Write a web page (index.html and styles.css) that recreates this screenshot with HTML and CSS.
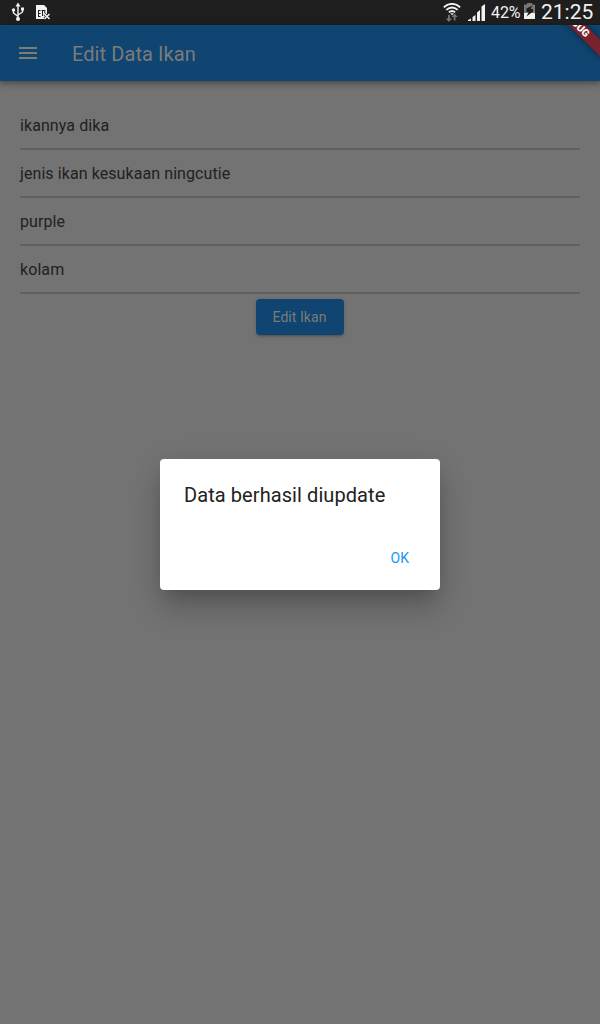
FILE: index.html
```html
<!DOCTYPE html>
<html lang="id">
<head>
<meta charset="utf-8">
<title>Edit Data Ikan</title>
<link rel="stylesheet" href="styles.css">
</head>
<body>
<div class="screen">
  <header class="status">
    <svg class="usb" width="14" height="20" viewBox="0 0 14 20" fill="none" stroke="#f2f2f2" stroke-width="1.4">
      <path d="M7 3v14M2.500 8.500v2.500L7 14.500M11.500 7.500v2.500L7 13"/>
      <path d="M7 .5 9.500 4.500h-5z" fill="#f2f2f2" stroke="none"/>
      <circle cx="7" cy="17" r="2" fill="#f2f2f2" stroke="none"/>
      <circle cx="2.500" cy="8" r="1.700" fill="#f2f2f2" stroke="none"/>
      <path d="M10 5.500h3v3h-3z" fill="#f2f2f2" stroke="none"/>
    </svg>
    <svg class="sim" width="15" height="16" viewBox="0 0 15 16">
      <path d="M0 0h8l3 3v6L9 14H0z" fill="#f2f2f2"/>
      <path d="M2 5.500h2.500M2 8.500h2.500M2 11.500h2.500M2.500 5v7M5.500 5.500H9M6.500 5v6M8.800 5v3" stroke="#1f1f1f" fill="none"/>
      <path d="m8.500 9 5 5m0-5-5 5" stroke="#1f1f1f" stroke-width="3"/>
      <path d="m8.500 9 5 5m0-5-5 5" stroke="#f2f2f2" stroke-width="1.500"/>
    </svg>
    <span class="spacer"></span>
    <svg class="wifi" width="18" height="20" viewBox="0 0 18 20" fill="none">
      <path d="M.8 4.200Q9-2.500 17.200 4.200M3.300 6.900Q9 2 14.700 6.900M5.900 9.300Q9 6.700 12.100 9.300" stroke="#f2f2f2" stroke-width="1.800"/>
      <path d="M7.200 10.300h3.600L9 12.300z" fill="#f2f2f2"/>
      <path d="M5 12h1.800v3.500H9L5.900 19 2.800 15.500H5zM10.700 17.500h1.800V14h2.200l-3.100-3.500L8.500 14h2.200z" fill="#777"/>
    </svg>
    <svg class="signal" width="17" height="17" viewBox="0 0 17 17" fill="#f2f2f2">
      <path d="M0 17v-1l3-1.500V17zM4.500 17v-4L7.500 11v6zM9 17V8.500L12 6v11zM13.500 17V2.500L17 0v17z"/>
    </svg>
    <span class="percent">42%</span>
    <svg class="battery" width="11" height="16" viewBox="0 0 11 16">
      <path d="M3 0h5v1.500h3V10H0V1.500h3z" fill="#777"/>
      <path d="M0 10h11v6H0z" fill="#f2f2f2"/>
      <path d="M8.500 2.500 2.500 5.500v3.500h2.200L2.500 13.500 9 8.500V6H6.500z" fill="#1c1c1c"/>
    </svg>
    <span class="clock">21:25</span>
  </header>
  <div class="appbar">
    <svg class="menu" width="18" height="12" viewBox="0 0 18 12" fill="#7d7d74"><path d="M0 0h18v2H0zM0 5h18v2H0zM0 10h18v2H0z"/></svg>
    <h1 class="title">Edit Data Ikan</h1>
    <div class="corner"><div class="ribbon">DEBUG</div></div>
  </div>
  <main class="form">
    <div class="field">ikannya dika</div>
    <div class="field">jenis ikan kesukaan ningcutie</div>
    <div class="field">purple</div>
    <div class="field">kolam</div>
    <button class="submit">Edit Ikan</button>
  </main>
  <div class="overlay">
    <div class="dialog">
      <div class="message">Data berhasil diupdate</div>
      <div class="actions"><span class="ok">OK</span></div>
    </div>
  </div>
</div>
</body>
</html>
```
FILE: styles.css
```css
* { box-sizing: border-box; }
body { margin: 0; font-family: Roboto, sans-serif; }
.screen { position: relative; width: 600px; height: 1024px; overflow: hidden; background: #737373; display: flex; flex-direction: column; }
.status { height: 25px; flex: none; display: flex; align-items: flex-start; background: #1f1f1f; color: #f2f2f2; padding: 0 6px 0 11px; }
.usb { margin-top: 2px; }
.sim { margin: 5px 0 0 11px; }
.spacer { flex: 1; }
.wifi { margin: 3px 7px 0 0; }
.signal { margin: 4px 6px 0 0; }
.percent { font-size: 16px; line-height: 25px; width: 30px; margin-right: 3px; letter-spacing: -.1px; }
.battery { margin: 3px 6px 0 0; }
.clock { font-size: 21px; line-height: 24px; width: 53px; }
.appbar { position: relative; height: 56px; flex: none; display: flex; align-items: center; background: #0f4570; box-shadow: 0 2px 4px -1px rgba(0,0,0,.2), 0 4px 5px rgba(0,0,0,.14), 0 1px 10px rgba(0,0,0,.12); padding-left: 19px; }
.title { margin: 0 0 0 35px; font-size: 20px; line-height: 24px; font-weight: 400; color: #7b7b7b; padding-top: 2px; letter-spacing: .08px; }
.corner { position: absolute; inset: 0; overflow: hidden; }
.ribbon { position: absolute; right: -40px; top: 3px; width: 80px; height: 12px; transform-origin: 40px -28px; transform: rotate(45deg); background: #79222e; box-shadow: 0 0 6px rgba(0,0,0,.5); color: #fff; font-size: 10.2px; line-height: 12px; font-weight: 900; text-align: center; }
.form { display: flex; flex-direction: column; padding: 21px 20px 0; }
.field { height: 48px; border-bottom: 2px solid #606060; font-size: 16px; line-height: 48px; color: #212121; letter-spacing: .08px; }
.submit { align-self: center; width: 88px; height: 36px; margin-top: 5px; border: 0; border-radius: 4px; padding: 0 1px 0 0; background: #0f4570; color: #7b7b7b; font: 400 14px/36px Roboto, sans-serif; letter-spacing: .05px; box-shadow: 0 3px 1px -2px rgba(0,0,0,.1), 0 2px 2px rgba(0,0,0,.1), 0 1px 5px rgba(0,0,0,.1); }
.overlay { position: absolute; inset: 25px 0 0; display: flex; align-items: center; justify-content: center; }
.dialog { width: 280px; height: 131px; background: #fff; border-radius: 4px; padding: 24px 24px 0; display: flex; flex-direction: column; box-shadow: 0 11px 15px -7px rgba(0,0,0,.14), 0 20px 30px rgba(0,0,0,.16), 0 4px 30px rgba(0,0,0,.08); }
.message { font-size: 20px; line-height: 24px; color: #212121; letter-spacing: .08px; }
.actions { display: flex; justify-content: flex-end; margin-top: 32px; padding-right: 7px; }
.ok { font-size: 14px; line-height: 38px; color: #2196f3; }
```
